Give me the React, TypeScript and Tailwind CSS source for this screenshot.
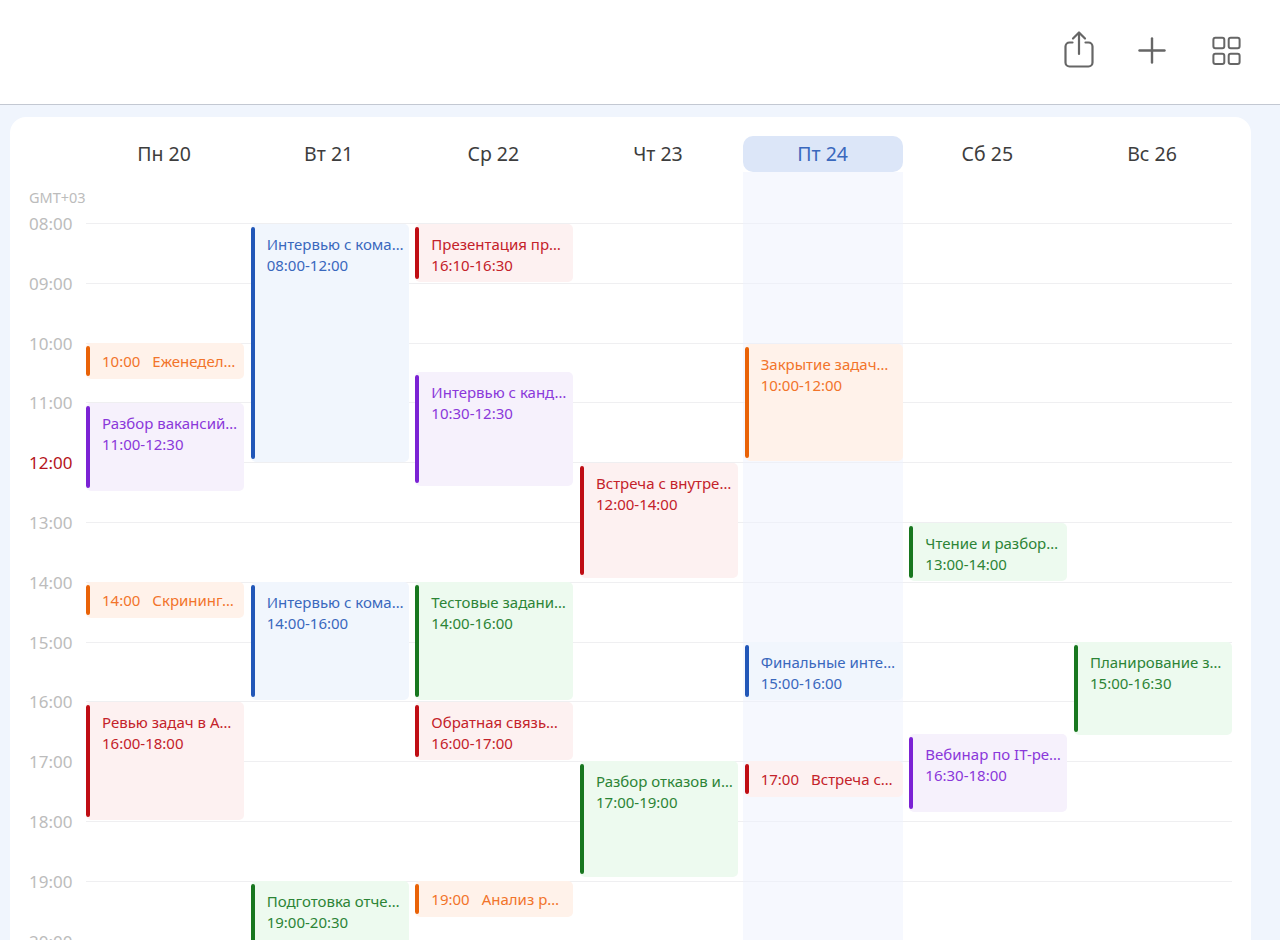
import React from "react";

type Tone = "blue" | "red" | "orange" | "purple" | "green";

const tones: Record<Tone, { box: string; bar: string; text: string }> = {
  blue: { box: "bg-[#f1f6fd]", bar: "bg-[#2257b8]", text: "text-[#3a68bd]" },
  red: { box: "bg-[#fdf1f1]", bar: "bg-[#bf0d14]", text: "text-[#c4222a]" },
  orange: { box: "bg-[#fff2ea]", bar: "bg-[#e96207]", text: "text-[#f2742a]" },
  purple: { box: "bg-[#f6f1fc]", bar: "bg-[#7b22d4]", text: "text-[#8a38da]" },
  green: { box: "bg-[#edfaef]", bar: "bg-[#18771f]", text: "text-[#2c8436]" },
};

type Ev = { top: number; h: number; title: string; time: string; tone: Tone; inline?: boolean };

const days: { label: string; today?: boolean; events: Ev[] }[] = [
  {
    label: "Пн 20",
    events: [
      { top: 343, h: 36, title: "Еженедел…", time: "10:00", tone: "orange", inline: true },
      { top: 403, h: 88, title: "Разбор вакансий…", time: "11:00-12:30", tone: "purple" },
      { top: 582, h: 36, title: "Скрининг…", time: "14:00", tone: "orange", inline: true },
      { top: 702, h: 118, title: "Ревью задач в А…", time: "16:00-18:00", tone: "red" },
    ],
  },
  {
    label: "Вт 21",
    events: [
      { top: 224, h: 238, title: "Интервью с кома…", time: "08:00-12:00", tone: "blue" },
      { top: 582, h: 118, title: "Интервью с кома…", time: "14:00-16:00", tone: "blue" },
      { top: 881, h: 90, title: "Подготовка отче…", time: "19:00-20:30", tone: "green" },
    ],
  },
  {
    label: "Ср 22",
    events: [
      { top: 224, h: 58, title: "Презентация пр…", time: "16:10-16:30", tone: "red" },
      { top: 372, h: 114, title: "Интервью с канд…", time: "10:30-12:30", tone: "purple" },
      { top: 582, h: 118, title: "Тестовые задани…", time: "14:00-16:00", tone: "green" },
      { top: 702, h: 58, title: "Обратная связь…", time: "16:00-17:00", tone: "red" },
      { top: 881, h: 36, title: "Анализ р…", time: "19:00", tone: "orange", inline: true },
    ],
  },
  {
    label: "Чт 23",
    events: [
      { top: 463, h: 115, title: "Встреча с внутре…", time: "12:00-14:00", tone: "red" },
      { top: 761, h: 116, title: "Разбор отказов и…", time: "17:00-19:00", tone: "green" },
    ],
  },
  {
    label: "Пт 24",
    today: true,
    events: [
      { top: 344, h: 117, title: "Закрытие задач…", time: "10:00-12:00", tone: "orange" },
      { top: 642, h: 58, title: "Финальные инте…", time: "15:00-16:00", tone: "blue" },
      { top: 761, h: 36, title: "Встреча с…", time: "17:00", tone: "red", inline: true },
    ],
  },
  {
    label: "Сб 25",
    events: [
      { top: 523, h: 58, title: "Чтение и разбор…", time: "13:00-14:00", tone: "green" },
      { top: 734, h: 78, title: "Вебинар по IT-ре…", time: "16:30-18:00", tone: "purple" },
    ],
  },
  {
    label: "Вс 26",
    events: [{ top: 642, h: 93, title: "Планирование з…", time: "15:00-16:30", tone: "green" }],
  },
];

const hours = ["08:00", "09:00", "10:00", "11:00", "12:00", "13:00", "14:00", "15:00", "16:00", "17:00", "18:00", "19:00", "20:00"];
const GRID_TOP = 223;

function EventCard({ e }: { e: Ev }) {
  const t = tones[e.tone];
  return (
    <div
      className={`absolute left-[2px] right-0 rounded-[5px] ${t.box} ${t.text} pl-4 text-[15px] leading-[21px] overflow-hidden whitespace-nowrap`}
      style={{ top: e.top - GRID_TOP, height: e.h }}
    >
      <div className={`absolute left-0 top-[3px] bottom-[3px] w-[4px] rounded-full ${t.bar}`} />
      {e.inline ? (
        <div className="flex gap-3 pt-[8px]">
          <span>{e.time}</span>
          <span>{e.title}</span>
        </div>
      ) : (
        <div className="pt-[10px]">
          <div>{e.title}</div>
          <div>{e.time}</div>
        </div>
      )}
    </div>
  );
}

export default function App() {
  return (
    <div
      className="h-[940px] overflow-hidden bg-[#f0f5fd]"
      style={{ fontFamily: '"Noto Sans", "Open Sans", sans-serif' }}
    >
      <header className="h-[105px] bg-white border-b border-[#c3c8d2] flex items-start justify-end pt-[30px] pr-[39px] text-[#666666]">
        <svg className="mr-[44px]" width="30" height="40" viewBox="0 0 30 40" fill="none" stroke="currentColor" strokeWidth="2.2" strokeLinecap="round" strokeLinejoin="round">
          <path d="M8.5 12.5H5.5a4 4 0 0 0-4 4v16a4 4 0 0 0 4 4h19a4 4 0 0 0 4-4v-16a4 4 0 0 0-4-4h-3" />
          <path d="M15 24V3" />
          <path d="M9 8.5L15 2.5 21 8.5" />
        </svg>
        <svg className="mr-[45px]" width="28" height="40" viewBox="0 0 28 40" fill="none" stroke="currentColor" strokeWidth="2.4" strokeLinecap="round">
          <path d="M14 8.5v24" />
          <path d="M1.5 20.5h25" />
        </svg>
        <svg width="30" height="40" viewBox="0 0 30 40" fill="none" stroke="currentColor" strokeWidth="2" strokeLinejoin="round">
          <rect x="2.4" y="7.7" width="10.9" height="10.6" rx="2" />
          <rect x="17.7" y="7.7" width="10.9" height="10.6" rx="2" />
          <rect x="2.4" y="23.7" width="10.9" height="10.4" rx="2" />
          <rect x="17.7" y="23.7" width="10.9" height="10.4" rx="2" />
        </svg>
      </header>

      <main className="ml-[10px] mr-[29px] mt-[12px] bg-white rounded-t-[16px] pr-[19px] pt-[19px] h-[900px]">
        <div className="relative">
          {/* weekday headers */}
          <div className="ml-[74px] grid grid-cols-7 gap-x-[4.67px]">
            {days.map((d) => (
              <div
                key={d.label}
                className={`h-[36px] pb-[1px] flex items-center justify-center text-[19.5px] rounded-[10px] ${
                  d.today ? "bg-[#dce6f8] text-[#3a68bd]" : "text-[#3d3d3d]"
                }`}
              >
                {d.label}
              </div>
            ))}
          </div>

          <div className="pl-[19px] h-[51px] pt-[16px] text-[14.5px] leading-[18px] text-[#bcbcbc]">GMT+03</div>

          {/* hour rows */}
          <div className="relative">
            {hours.map((h) => (
              <div key={h} className="h-[59.8px] flex items-start">
                <div
                  className={`w-[76px] pl-[19px] text-[17px] leading-[20px] -mt-[9px] ${
                    h === "12:00" ? "text-[#b5141b]" : "text-[#bcbcbc]"
                  }`}
                >
                  {h}
                </div>
                <div className="flex-1 border-t border-[#efeff1]" />
              </div>
            ))}

            {/* day columns over the hour rows */}
            <div className="absolute inset-0 ml-[74px] grid grid-cols-7 gap-x-[4.67px]">
              {days.map((d) => (
                <div key={d.label} className={`relative ${d.today ? "bg-[#eef2fd]/50" : ""}`}>
                  {d.events.map((e) => (
                    <EventCard key={e.title + e.time} e={e} />
                  ))}
                </div>
              ))}
            </div>
          </div>

          {/* today's column band between header and grid */}
          <div className="absolute top-[36px] h-[51px] left-[732.67px] w-[160px] bg-[#eef2fd]/50" />
        </div>
      </main>
    </div>
  );
}
